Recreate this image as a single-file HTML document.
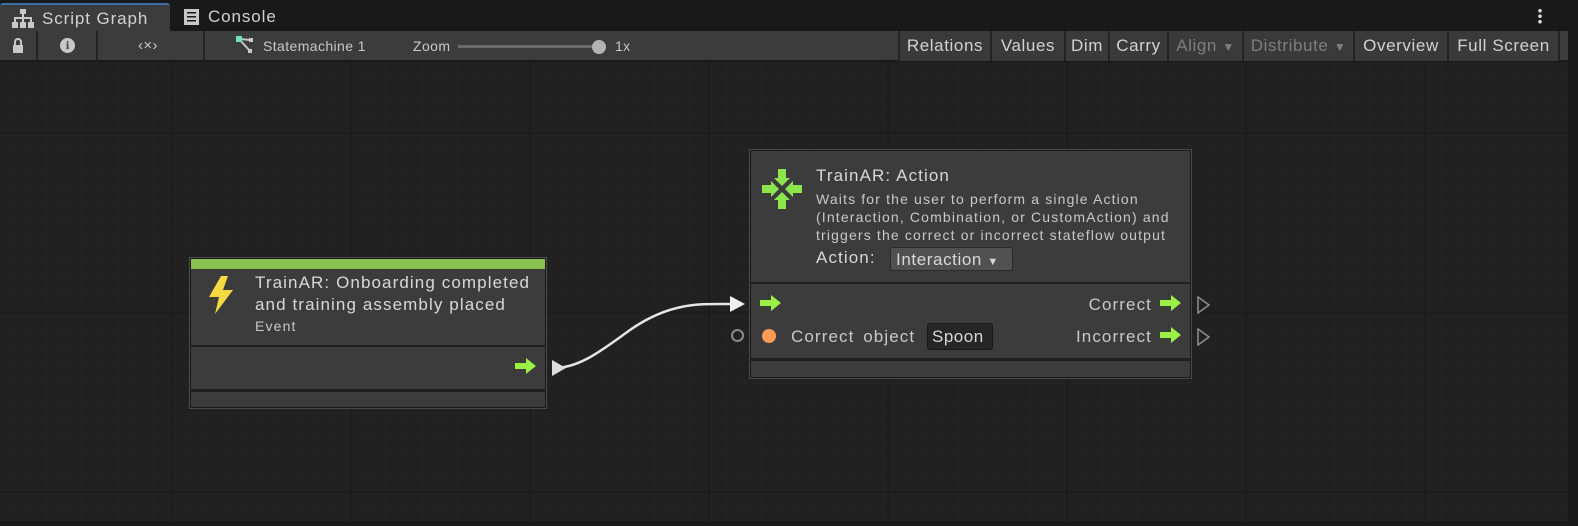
<!DOCTYPE html>
<html><head><meta charset="utf-8"><style>
*{box-sizing:border-box;margin:0;padding:0}
body{width:1578px;height:526px;background:#191919;font-family:"Liberation Sans",sans-serif;position:relative;overflow:hidden;color:#c4c4c4}
.abs{position:absolute}
#tabs{left:0;top:0;width:1578px;height:31px;background:#191919}
.tab{top:3px;height:28px;font-size:17px;color:#d2d2d2;padding:4px 0 0 42px;letter-spacing:0.9px}
#tb{left:0;top:31px;width:1568px;height:30px;background:#3c3c3c;border-bottom:1px solid #1a1a1a}
.sep{top:31px;width:2px;height:30px;background:#232323}
.tbt{font-size:14px;color:#c8c8c8;top:38px;letter-spacing:0.4px}
.btn{top:31px;height:30px;background:#3a3a3a;border-left:2px solid #232323;font-size:17px;color:#d2d2d2;padding-top:5px;text-align:center;white-space:nowrap;letter-spacing:0.6px}
.dis{color:#7e7e7e}
#graph{left:0;top:62px;width:1568px;height:459px;background-color:#212121;
background-image:linear-gradient(90deg,#1c1c1c 2px,transparent 2px),linear-gradient(#1c1c1c 2px,transparent 2px),linear-gradient(90deg,#232323 1px,transparent 1px),linear-gradient(#232323 1px,transparent 1px);
background-size:179px 179.5px,179px 179.5px,17.9px 17.95px,17.9px 17.95px;background-position:-8px 70px,-8px 70px,-8px 70px,-8px 70px}
.node{background:#3c3c3c;border:1px solid #1a1a1a;box-shadow:0 0 0 1px #4a4a4a}
.t{color:#d8d8d8;font-size:17px;letter-spacing:1.1px}
.s{color:#c8c8c8;font-size:14px;letter-spacing:1.15px}
</style></head><body>
<div id="tabs" class="abs"></div>
<div class="abs tab" style="left:0;width:170px;background:#3c3c3c;border-top:2px solid #3d6ea8;border-radius:3px 3px 0 0">Script Graph</div>
<svg class="abs" style="left:12px;top:9px" width="22" height="20" viewBox="0 0 22 20" fill="#c8c8c8"><rect x="8" y="0" width="6" height="5"/><rect x="10" y="5" width="2" height="4"/><rect x="2" y="8" width="18" height="2"/><rect x="2" y="8" width="2" height="5"/><rect x="10" y="8" width="2" height="5"/><rect x="18" y="8" width="2" height="5"/><rect x="0" y="13" width="6" height="6"/><rect x="8" y="13" width="6" height="6"/><rect x="16" y="13" width="6" height="6"/></svg>
<div class="abs tab" style="left:166px">Console</div>
<svg class="abs" style="left:184px;top:9px" width="15" height="16" viewBox="0 0 15 16"><rect width="15" height="16" fill="#c8c8c8"/><rect x="3" y="3" width="9" height="1.5" fill="#191919"/><rect x="3" y="7" width="9" height="1.5" fill="#191919"/><rect x="3" y="11" width="9" height="1.5" fill="#191919"/></svg>
<div class="abs" style="left:1538px;top:8px;width:4px;height:16px;background:radial-gradient(circle,#ddd 1.6px,transparent 2px) 0 0/4px 5.5px"></div>
<div id="tb" class="abs"></div>
<div class="abs sep" style="left:36px"></div><div class="abs sep" style="left:96px"></div><div class="abs sep" style="left:203px"></div>
<svg class="abs" style="left:12px;top:38px" width="12" height="16" viewBox="0 0 12 16"><path d="M3 7V4a3 3 0 0 1 6 0v3" stroke="#c8c8c8" stroke-width="2" fill="none"/><rect x="1" y="7" width="10" height="8" fill="#c8c8c8"/></svg>
<div class="abs" style="left:60px;top:38px;width:15px;height:15px;border-radius:50%;background:#c8c8c8;color:#3c3c3c;font:bold 12px 'Liberation Serif',serif;text-align:center;line-height:15px">i</div>
<div class="abs tbt" style="left:138px;top:37px;font-size:15px">‹×›</div>
<svg class="abs" style="left:236px;top:36px" width="18" height="18" viewBox="0 0 18 18"><path d="M3 3L15 4M3 3L14 15" stroke="#c8c8c8" stroke-width="2"/><rect x="0" y="0" width="6" height="6" fill="#6fe3c9"/><rect x="13" y="2" width="4" height="4" fill="#c8c8c8"/><rect x="12" y="13" width="4" height="4" fill="#c8c8c8"/></svg>
<div class="abs tbt" style="left:263px">Statemachine 1</div>
<div class="abs tbt" style="left:413px">Zoom</div>
<div class="abs" style="left:458px;top:45px;width:142px;height:3px;background:#6a6a6a"></div>
<div class="abs" style="left:592px;top:40px;width:14px;height:14px;border-radius:50%;background:#b4b4b4"></div>
<div class="abs tbt" style="left:615px">1x</div>
<div class="abs btn" style="left:898px;width:92px">Relations</div>
<div class="abs btn" style="left:990px;width:74px">Values</div>
<div class="abs btn" style="left:1064px;width:44px">Dim</div>
<div class="abs btn" style="left:1108px;width:59px">Carry</div>
<div class="abs btn dis" style="left:1167px;width:75px">Align <span style="font-size:12px">▼</span></div>
<div class="abs btn dis" style="left:1242px;width:111px">Distribute <span style="font-size:12px">▼</span></div>
<div class="abs btn" style="left:1353px;width:94px">Overview</div>
<div class="abs btn" style="left:1447px;width:111px">Full Screen</div>
<div class="abs" style="left:1558px;top:31px;width:2px;height:30px;background:#232323"></div>
<div id="graph" class="abs"></div>

<!-- event node -->
<div class="abs node" style="left:190px;top:258px;width:356px;height:150px"></div>
<div class="abs" style="left:191px;top:259px;width:354px;height:10px;background:#8bc24f"></div>
<div class="abs" style="left:191px;top:345px;width:354px;height:2px;background:#1f1f1f"></div>
<div class="abs" style="left:191px;top:389px;width:354px;height:3px;background:#1f1f1f"></div>
<svg class="abs" style="left:206px;top:276px" width="30" height="38" viewBox="0 0 30 38"><path d="M15 0L3 21H13L9 38L27 14H17L22 0Z" fill="#f5d942"/></svg>
<div class="abs t" style="left:255px;top:272px;line-height:22px">TrainAR: Onboarding completed<br>and training assembly placed</div>
<div class="abs s" style="left:255px;top:318px">Event</div>
<svg class="abs" style="left:515px;top:358px" width="22" height="16" viewBox="0 0 22 16"><path d="M0 5H11V0L21 8L11 16V11H0Z" fill="#9af045"/></svg>
<svg class="abs" style="left:540px;top:290px" width="210" height="100" viewBox="0 0 210 100"><path d="M12 78L14 78C40 78 62 60 90 40C130 12 160 14 190 14" stroke="#e6e6e6" stroke-width="2.5" fill="none"/><path d="M12 70L26 78L12 86Z" fill="#dcdcdc"/><path d="M190 6L205 14L190 22Z" fill="#f0f0f0"/></svg>

<!-- action node -->
<div class="abs node" style="left:750px;top:150px;width:441px;height:228px"></div>
<div class="abs" style="left:751px;top:282px;width:439px;height:2px;background:#1f1f1f"></div>
<div class="abs" style="left:751px;top:358px;width:439px;height:3px;background:#1f1f1f"></div>
<svg class="abs" style="left:761px;top:168px" width="42" height="42" viewBox="0 0 42 42" fill="#8ce64b"><path d="M21 18L13 10H17V1H25V10H29Z"/><path d="M21 24L13 32H17V41H25V32H29Z"/><path d="M18 21L10 13V17H1V25H10V29Z"/><path d="M24 21L32 13V17H41V25H32V29Z"/></svg>
<div class="abs t" style="left:816px;top:166px">TrainAR: Action</div>
<div class="abs s" style="left:816px;top:190px;line-height:18px">Waits for the user to perform a single Action<br>(Interaction, Combination, or CustomAction) and<br>triggers the correct or incorrect stateflow output</div>
<div class="abs t" style="left:816px;top:248px">Action:</div>
<div class="abs t" style="left:890px;top:247px;width:123px;height:24px;background:#515151;border:1px solid #2a2a2a;border-radius:3px;padding:2px 0 0 5px;letter-spacing:0.6px">Interaction <span style="font-size:11px">▼</span></div>
<svg class="abs" style="left:760px;top:295px" width="22" height="16" viewBox="0 0 22 16"><path d="M0 5H11V0L21 8L11 16V11H0Z" fill="#9af045"/></svg>
<div class="abs t" style="left:1000px;width:152px;text-align:right;top:295px;color:#c8c8c8">Correct</div>
<svg class="abs" style="left:1160px;top:295px" width="22" height="16" viewBox="0 0 22 16"><path d="M0 5H11V0L21 8L11 16V11H0Z" fill="#9af045"/></svg>
<svg class="abs" style="left:1197px;top:296px" width="14" height="18" viewBox="0 0 14 18"><path d="M1 1L12 9L1 17Z" stroke="#8a8a8a" stroke-width="1.6" fill="none"/></svg>
<div class="abs" style="left:731px;top:329px;width:13px;height:13px;border:2px solid #8a8a8a;border-radius:50%"></div>
<div class="abs" style="left:762px;top:329px;width:14px;height:14px;background:#ff9b55;border-radius:50%"></div>
<div class="abs t" style="left:791px;top:327px;color:#c8c8c8;word-spacing:3px">Correct object</div>
<div class="abs t" style="left:927px;top:323px;width:66px;height:27px;background:#262626;border:1px solid #1a1a1a;border-radius:3px;padding:3px 0 0 4px;letter-spacing:0.5px">Spoon</div>
<div class="abs t" style="left:1000px;width:152px;text-align:right;top:327px;color:#c8c8c8">Incorrect</div>
<svg class="abs" style="left:1160px;top:327px" width="22" height="16" viewBox="0 0 22 16"><path d="M0 5H11V0L21 8L11 16V11H0Z" fill="#9af045"/></svg>
<svg class="abs" style="left:1197px;top:328px" width="14" height="18" viewBox="0 0 14 18"><path d="M1 1L12 9L1 17Z" stroke="#8a8a8a" stroke-width="1.6" fill="none"/></svg>
</body></html>
